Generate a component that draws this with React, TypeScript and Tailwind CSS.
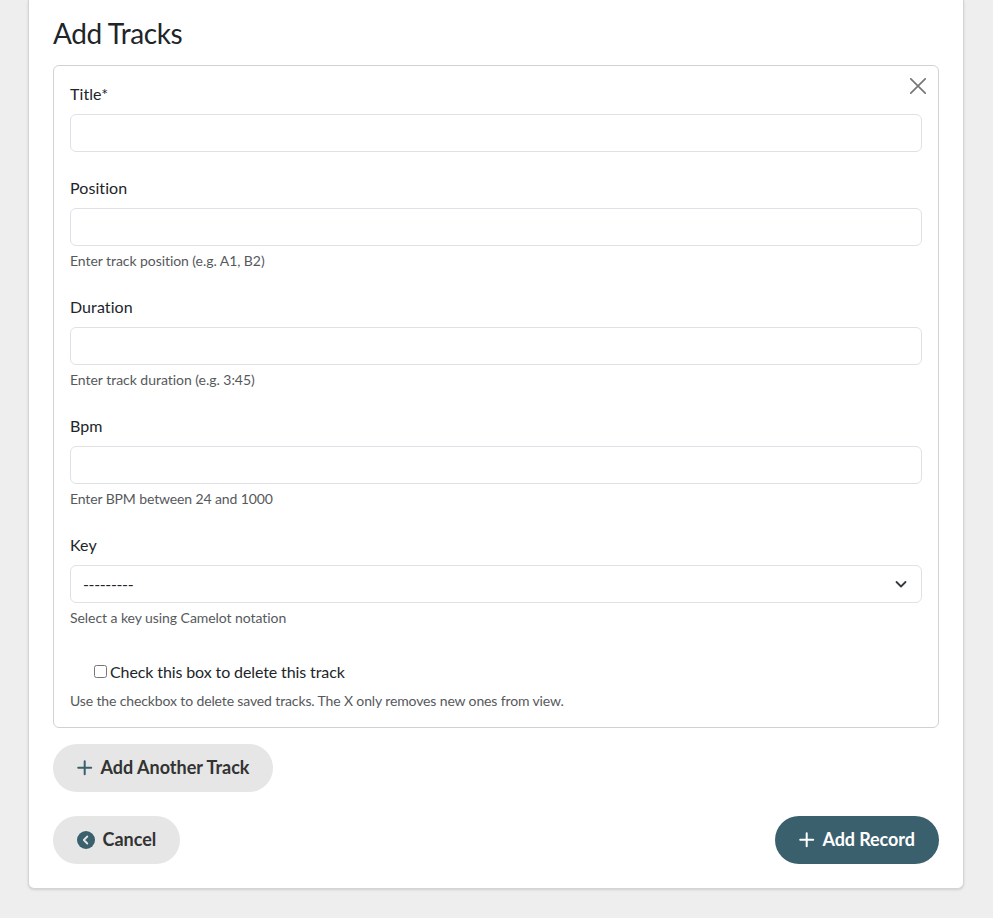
import React from "react";

const inputClass = "h-[38px] w-full rounded-md border border-[#dee2e6] bg-white";
const helpClass = "text-[14px] leading-[21px] text-[#56595c]";

type FieldProps = { label: string; help?: string; helpTracking?: string; children: React.ReactNode };

function Field({ label, help, helpTracking = "tracking-[-0.06px]", children }: FieldProps) {
  return (
    <div className={help ? "h-[119px]" : "h-[94px]"}>
      <label className="mb-2 block text-[16px] leading-6 tracking-[0.08px]">{label}</label>
      {children}
      {help && <div className={"mt-1 " + helpClass + " " + helpTracking}>{help}</div>}
    </div>
  );
}

function Plus({ className }: { className: string }) {
  return (
    <svg viewBox="0 0 16 16" className={className} fill="none" stroke="currentColor" strokeWidth="2" strokeLinecap="round">
      <path d="M7.7 1.2v13M1.2 7.7h13" />
    </svg>
  );
}

export default function App() {
  return (
    <div className="h-[918px] overflow-hidden bg-[#eeeeee] px-7 font-['Lato',sans-serif] text-[#212529] [font-variant-ligatures:none]">
      <main className="h-[889px] w-[936px] rounded-b-md border border-t-0 border-[#d3d4d5] bg-white px-6 shadow-sm">
        <h2 className="h-[65px] pt-[16px] text-[28px] leading-[34px] tracking-[-0.42px]">Add Tracks</h2>
        <section className="relative h-[663px] rounded-md border border-[#cfd2d5] px-4 pt-4">
          <button aria-label="Remove track" className="absolute right-[12px] top-[12px] text-[#777]">
            <svg viewBox="0 0 16 16" className="block size-4" stroke="currentColor" strokeWidth="1.7" strokeLinecap="round">
              <path d="M.8.8l14.4 14.4M15.2.8.8 15.2" />
            </svg>
          </button>
          <Field label="Title*"><input className={inputClass} /></Field>
          <Field label="Position" help="Enter track position (e.g. A1, B2)"><input className={inputClass} /></Field>
          <Field label="Duration" help="Enter track duration (e.g. 3:45)" helpTracking="tracking-[-0.03px]"><input className={inputClass} /></Field>
          <Field label="Bpm" help="Enter BPM between 24 and 1000" helpTracking="tracking-[-0.12px]"><input className={inputClass} /></Field>
          <Field label="Key" help="Select a key using Camelot notation">
            <button className={inputClass + " flex items-center justify-between px-3"}>
              <span className="tracking-[-0.36px]">---------</span>
              <svg viewBox="0 0 16 12" className="h-3 w-4" fill="none" stroke="#343a40" strokeWidth="1.8" strokeLinecap="round" strokeLinejoin="round">
                <path d="m3.5 4 4.5 4.5L12.5 4" />
              </svg>
            </button>
          </Field>
          <label className="mt-2 flex h-6 items-center pl-6 text-[16px] leading-6 tracking-[-0.11px]">
            <input type="checkbox" className="relative -top-px mr-[3px] size-[13px]" />
            Check this box to delete this track
          </label>
          <div className={"mt-1.5 tracking-[-0.13px] " + helpClass}>Use the checkbox to delete saved tracks. The X only removes new ones from view.</div>
        </section>
        <button className="mt-4 flex h-12 w-[220px] items-center rounded-full bg-[#e6e6e6] pb-px pl-6 text-[18px] font-bold text-[#333]">
          <Plus className="mr-[7.5px] size-4 text-[#3a5f6d]" />
          Add Another Track
        </button>
        <div className="mt-6 flex justify-between">
          <button className="flex h-12 w-[127px] items-center rounded-full bg-[#e6e6e6] pb-px pl-6 text-[18px] font-bold text-[#333]">
            <svg viewBox="0 0 18 18" className="mr-[7.5px] size-[18px]">
              <circle cx="9" cy="9" r="9" fill="#3a5f6d" />
              <path d="m10.3 5.5-3.5 3.5 3.5 3.5" fill="none" stroke="#e6e6e6" strokeWidth="1.8" strokeLinecap="round" strokeLinejoin="round" />
            </svg>
            Cancel
          </button>
          <button className="flex h-12 w-[164px] items-center rounded-full bg-[#3a5f6d] pb-px pl-6 text-[18px] font-bold tracking-[-0.1px] text-white">
            <Plus className="mr-[7.5px] size-4" />
            Add Record
          </button>
        </div>
      </main>
    </div>
  );
}
